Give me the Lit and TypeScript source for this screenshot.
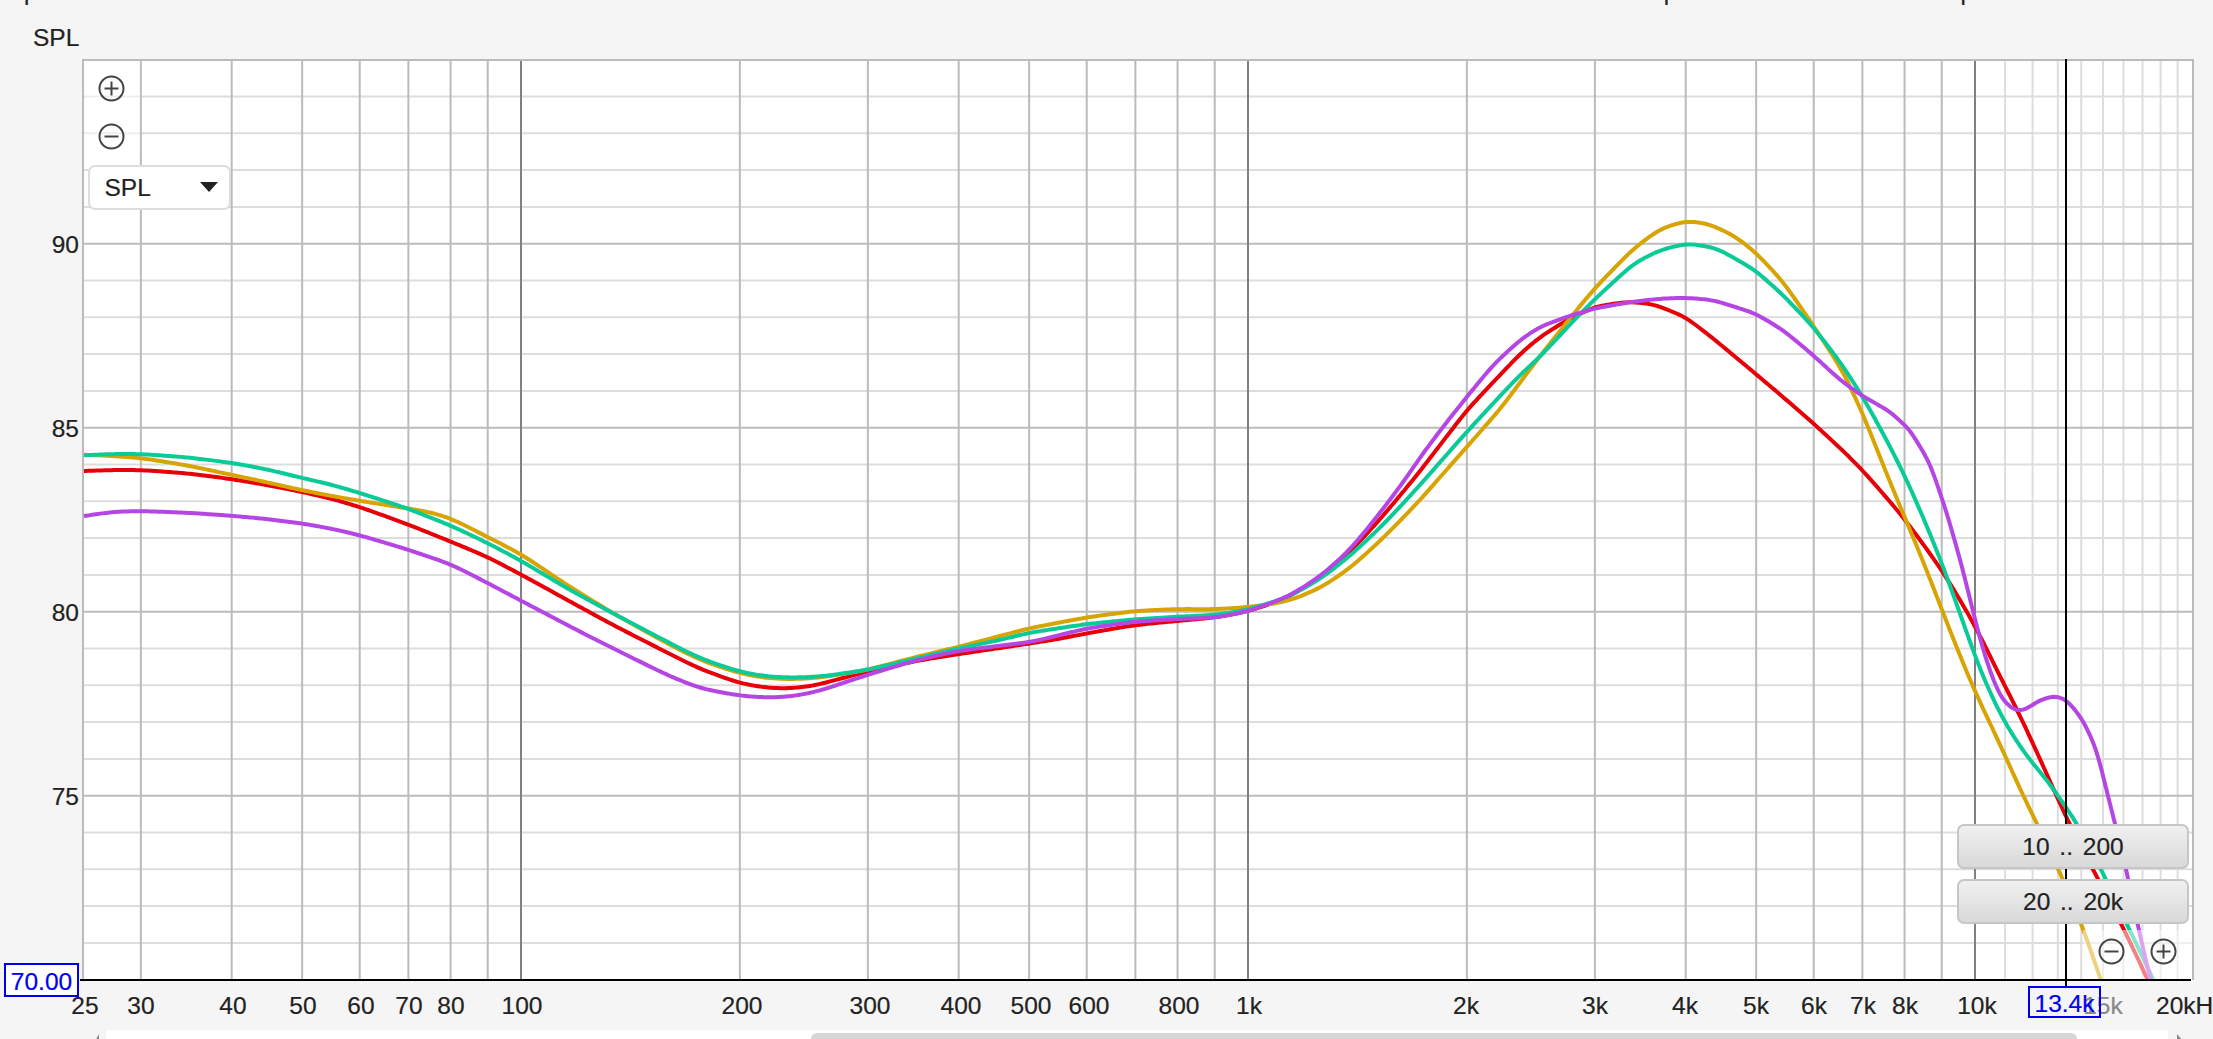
import { LitElement, html, css, svg } from "lit";
import { customElement } from "lit/decorators.js";

const fx = (f: number) => 1975 + 727 * Math.log10(f / 10000);
const dy = (db: number) => 243.7 + (90 - db) * 36.8;

const RED = [84,471,113,470,141,470,187,473.3,231,479,267,485,301,491.7,330,498.3,359,506.7,407,524,451,541.7,487,556.7,521,574.5,580,607,613,625,667,652.5,700,669,739,683,763,687.5,783,688.7,810,686.7,867,671.7,917,660.7,959,654,1000,648,1057,639.3,1087,633.3,1135,625,1177,621,1215,617.5,1247,611.7,1287,598.3,1320,577.3,1350,552.3,1383,516,1417,475,1467,410,1500,375,1520,354,1540,337,1567,320,1595,306.7,1627,301.7,1653,304,1685,316.7,1713,338.3,1755,373.3,1783,397,1813,423,1840,448,1861,468.3,1903,516.7,1942,570,1975,625,2000,676.7,2020,715,2057,796.7,2068,822,2097,877,2123,927,2147,978,2155,996,2175,1036];
const PURPLE = [84,516,113,511.7,141,511,187,512.7,231,515.7,267,519,301,523.3,330,528.3,359,535,407,549.3,451,564.3,487,582.7,521,600.7,580,631.7,613,648.3,667,675,700,688.3,739,695.7,767,697.7,790,696.7,817,691.7,867,675,917,660,959,650.7,1000,645.7,1033,641.7,1087,628.3,1135,621.7,1177,619,1215,617.7,1247,611.7,1287,597.3,1320,576.7,1350,550,1377,516.7,1400,486.7,1423,453.3,1447,421.7,1467,396.7,1493,365,1520,340,1540,326.7,1567,316.7,1595,308.3,1633,301.7,1660,298.7,1685,297.7,1713,300,1755,313.3,1783,330,1813,355,1840,380,1861,395,1890,411.7,1910,430,1930,463.3,1947,513.3,1963,570,1975,620,1987,663.3,2000,696.7,2013,710,2023,711,2040,700,2055,695.7,2067,700,2083,720,2097,750,2108,796.7,2115,823,2128,877,2138,927,2150,978,2155,996,2165,1036];
const GREEN = [84,455.3,113,454,141,454,187,457.3,231,462.7,267,469.3,301,477.7,330,484.3,359,492.7,407,508.3,451,525.7,487,542.7,521,560.7,567,588.3,613,613.3,667,641.7,700,658.3,739,671.7,767,676.7,793,677.7,820,676.7,867,670,917,658.3,959,648.3,1000,640,1029,632.7,1087,624,1135,619.3,1177,616.7,1215,615,1247,610,1287,597.7,1320,579.3,1350,556,1383,525,1417,488.3,1467,431.7,1500,396,1520,375,1540,356.7,1578,316,1595,299,1633,264,1660,250,1688,243.3,1717,248.3,1755,270,1783,295,1813,326.7,1840,361.7,1863,397,1883,433.3,1903,471.7,1923,516.7,1942,563.3,1960,613.3,1975,656.7,1990,693.3,2007,726.7,2027,756.7,2047,780,2077,823,2105,877,2128,927,2153,978,2160,996,2180,1036];
const GOLD = [84,454.7,113,456,141,458,187,465.3,231,474.7,267,482.3,301,490,330,495.7,359,500.7,380,504,407,508.3,430,512,451,518.3,487,536.7,521,554,567,585,613,613.3,667,643.3,700,660,739,673.3,767,678.3,793,679.3,820,677.7,867,670,917,656.7,959,646.7,1000,636,1029,628.3,1087,617.3,1135,611,1177,609,1215,609.3,1247,607.3,1287,601.7,1320,588.3,1350,568.3,1383,538.3,1417,503.3,1467,446.7,1500,409.3,1540,356,1578,308.3,1595,288,1633,249,1660,229,1685,221,1707,223.3,1733,235,1755,251.7,1783,281.7,1813,325,1840,366.7,1861,406.7,1880,458.3,1903,513.3,1927,570,1943,613.3,1975,693.3,1997,736.7,2023,796.7,2037,823,2062,877,2082,923,2100,978,2106,996,2120,1036];

/* The curves are read off as a list of points; a variable-width gaussian over x turns them into one smooth trace. */
function smooth(a: number[], tailSigma: number): string {
  const xs: number[] = [], ys: number[] = [];
  let seg = 0;
  const x0 = a[0], x1 = a[a.length - 2];
  for (let x = x0; x <= x1; x += 2) {
    while (a[seg * 2 + 2] < x) seg++;
    const t = (x - a[seg * 2]) / (a[seg * 2 + 2] - a[seg * 2]);
    xs.push(x);
    ys.push(a[seg * 2 + 1] + t * (a[seg * 2 + 3] - a[seg * 2 + 1]));
  }
  const sigmaAt = (x: number) => (x < 1400 ? 10 : x < 1850 ? 7 : tailSigma);
  let d = "";
  for (let i = 0; i < xs.length; i++) {
    const s = sigmaAt(xs[i]);
    const r = Math.min(Math.ceil((2.5 * s) / 2), i, xs.length - 1 - i);
    let w = 0, v = 0;
    for (let j = -r; j <= r; j++) {
      const k = Math.exp(-((j * 2) ** 2) / (2 * s * s));
      w += k;
      v += k * ys[i + j];
    }
    d += `${i ? "L" : "M"}${xs[i]} ${(v / w).toFixed(2)}`;
  }
  return d;
}

const VMAJOR = [30,40,50,60,70,80,90,200,300,400,500,600,700,800,900,2000,3000,4000,5000,6000,7000,8000,9000];
const VDECADE = [100,1000,10000];
const VLIGHT = [11000,12000,13000,14000,15000,16000,17000,18000,19000];
const XLABELS: [string, number][] = [["25",85],["30",141],["40",233],["50",303],["60",361],["70",409],["80",451],["100",522],["200",742],["300",870],["400",961],["500",1031],["600",1089],["800",1179],["1k",1249],["2k",1466],["3k",1595],["4k",1685],["5k",1756],["6k",1814],["7k",1863],["8k",1905],["10k",1977]];

const Y_TOP = 59;
const plusIcon = html`<svg class="zoom-icon" viewBox="0 0 27 27"><circle cx="13.5" cy="13.5" r="12"></circle><path d="M6.5 13.5h14M13.5 6.5v14"></path></svg>`;
const minusIcon = html`<svg class="zoom-icon" viewBox="0 0 27 27"><circle cx="13.5" cy="13.5" r="12"></circle><path d="M6.5 13.5h14"></path></svg>`;

@customElement("app-root")
export class AppRoot extends LitElement {
  static styles = css`
    :host { display: block; width: 2213px; height: 1039px; overflow: hidden; }
    .page {
      width: 2213px; height: 1039px; overflow: hidden; background: #f5f5f5; color: #222;
      font-family: "Liberation Sans", Arial, sans-serif; font-size: 24.5px; line-height: 24px;
      -webkit-text-stroke: 0.2px currentColor;
      display: grid; grid-template-columns: 82px 2112px 19px; grid-template-rows: 59px 922px 49px 9px;
    }
    .head { grid-column: 1 / -1; display: flex; flex-direction: column; overflow: hidden; }
    .menu { display: flex; gap: 55px; height: 24px; margin-top: -20px; padding: 0 11px 0 24px; white-space: nowrap; font-size: 24px; }
    .menu .first { margin-right: auto; }
    .menu .last { margin-left: 33px; }
    .title { margin-top: 22px; padding-left: 33px; }
    .y-axis { position: relative; }
    .y-label { position: absolute; right: 3px; }
    .value-box {
      position: absolute; left: 4px; top: 904px; width: 75px; height: 34px; box-sizing: border-box;
      border: 2px solid #0000f0; background: #fff; color: #0000f0;
      display: flex; align-items: center; justify-content: center; padding-top: 4px;
    }
    .plot { position: relative; }
    .plot > svg.chart { display: block; width: 2112px; height: 922px; overflow: visible; background: #fff; }
    .grid-major { stroke: #bbb; stroke-width: 2; }
    .grid-minor { stroke: #ddd; stroke-width: 2; }
    .grid-decade { stroke: #808080; stroke-width: 2; }
    .axis { stroke: #000; stroke-width: 2; }
    .curve { fill: none; stroke-width: 4; stroke-linejoin: round; }
    .red { stroke: #e80008; }
    .purple { stroke: #b646e4; }
    .green { stroke: #0acb98; }
    .gold { stroke: #d8a404; }
    .pane { position: absolute; background: rgba(255,255,255,.5); display: flex; }
    .pane-left { left: 3px; top: 3px; width: 55px; height: 92px; flex-direction: column; gap: 21px; padding: 12.5px; box-sizing: border-box; }
    .pane-right { left: 2001px; top: 871px; right: 2px; bottom: 2px; gap: 25.5px; padding: 8px 0 0 14.5px; box-sizing: border-box; }
    .zoom-icon { width: 27px; height: 27px; flex: none; fill: none; stroke: #444; stroke-width: 2; }
    .select {
      position: absolute; left: 5.5px; top: 105.5px; width: 143px; height: 45px; box-sizing: border-box;
      border: 2px solid #ddd; border-radius: 7px; background: #fff;
      display: flex; align-items: center; justify-content: space-between; padding: 2px 11px 0 15px;
    }
    .caret { width: 0; height: 0; border-left: 9px solid transparent; border-right: 9px solid transparent; border-top: 10px solid #222; margin-top: -2px; }
    .ranges { position: absolute; left: 1875px; top: 765px; width: 232px; display: flex; flex-direction: column; gap: 10px; }
    .range {
      height: 45px; box-sizing: border-box; border: 2px solid #c6c6c6; border-radius: 7px; word-spacing: 3px;
      background: linear-gradient(#f0f0f0, #d9d9d9); display: flex; align-items: center; justify-content: center;
    }
    .x-axis { grid-column: 1 / -1; position: relative; }
    .x-label { position: absolute; top: 13px; transform: translateX(-50%); white-space: nowrap; }
    .x-label.dim { color: #888; }
    .x-end { position: absolute; left: 2156px; top: 13px; white-space: nowrap; }
    .freq-box {
      position: absolute; left: 2028px; top: 5px; width: 73px; height: 32px; box-sizing: border-box;
      border: 2px solid #0000f0; color: #0000f0; display: flex; align-items: center; justify-content: center; padding-top: 3px; white-space: nowrap;
    }
    .scroll { grid-column: 1 / -1; display: flex; padding-left: 95px; align-items: flex-start; }
    .arrow-left { width: 0; height: 0; border-right: 4px solid #8a8a8a; border-top: 7px solid transparent; border-bottom: 7px solid transparent; margin-top: 4px; flex: none; }
    .arrow-right { width: 0; height: 0; border-left: 6px solid #8a8a8a; border-top: 7px solid transparent; border-bottom: 7px solid transparent; margin: 4px 0 0 9px; flex: none; }
    .track { width: 2062px; height: 9px; background: #fff; margin-left: 7px; flex: none; display: flex; padding-left: 705px; box-sizing: border-box; }
    .thumb { width: 1266px; height: 6px; margin-top: 3px; background: #d6d6d6; border-radius: 8px 8px 0 0; }
  `;

  render() {
    const hMinor: number[] = [];
    const hMajor: number[] = [];
    for (let d = 94; d >= 71; d--) (d % 5 === 0 ? hMajor : hMinor).push(d);
    const vLine = (f: number, cls: string) => svg`<line class=${cls} x1=${fx(f)} x2=${fx(f)} y1="60" y2="980"></line>`;
    const hLine = (d: number, cls: string) => svg`<line class=${cls} x1="83" x2="2193" y1=${dy(d)} y2=${dy(d)}></line>`;
    return html`
      <div class="page">
        <div class="head">
          <div class="menu">
            <span class="first">p</span><span>Separate</span><span>Calculate</span><span>Options</span><span class="last">Controls</span>
          </div>
          <div class="title">SPL</div>
        </div>
        <div class="y-axis">
          ${[90, 85, 80, 75].map((d) => html`<span class="y-label" style="top:${(dy(d) - Y_TOP - 10.5).toFixed(1)}px">${d}</span>`)}
          <div class="value-box">70.00</div>
        </div>
        <div class="plot">
          <svg class="chart" viewBox="82 59 2112 922">
            <defs><clipPath id="plot-clip"><rect x="83" y="60" width="2110" height="919.5"></rect></clipPath></defs>
            ${hMinor.map((d) => hLine(d, "grid-minor"))}
            ${VLIGHT.map((f) => vLine(f, "grid-minor"))}
            ${hMajor.map((d) => hLine(d, "grid-major"))}
            ${VMAJOR.map((f) => vLine(f, "grid-major"))}
            ${VDECADE.map((f) => vLine(f, "grid-decade"))}
            <path class="grid-major" fill="none" d="M83 980V60H2193V980"></path>
            <g clip-path="url(#plot-clip)">
              <path class="curve red" d=${smooth(RED, 10)}></path>
              <path class="curve gold" d=${smooth(GOLD, 12)}></path>
              <path class="curve green" d=${smooth(GREEN, 8)}></path>
              <path class="curve purple" d=${smooth(PURPLE, 4.5)}></path>
            </g>
            <line class="axis" x1="80" x2="2191" y1="980" y2="980"></line>
            <line class="axis" x1="2066" x2="2066" y1="59" y2="986"></line>
          </svg>
          <div class="pane pane-left">${plusIcon}${minusIcon}</div>
          <div class="select"><span>SPL</span><span class="caret"></span></div>
          <div class="ranges"><div class="range">10 .. 200</div><div class="range">20 .. 20k</div></div>
          <div class="pane pane-right">${minusIcon}${plusIcon}</div>
        </div>
        <div></div>
        <div class="x-axis">
          ${XLABELS.map(([t, x]) => html`<span class="x-label" style="left:${x}px">${t}</span>`)}
          <span class="x-label dim" style="left:2103px">15k</span>
          <span class="x-end">20kHz</span>
          <div class="freq-box">13.4k</div>
        </div>
        <div class="scroll">
          <span class="arrow-left"></span>
          <div class="track"><div class="thumb"></div></div>
          <span class="arrow-right"></span>
        </div>
      </div>
    `;
  }
}
